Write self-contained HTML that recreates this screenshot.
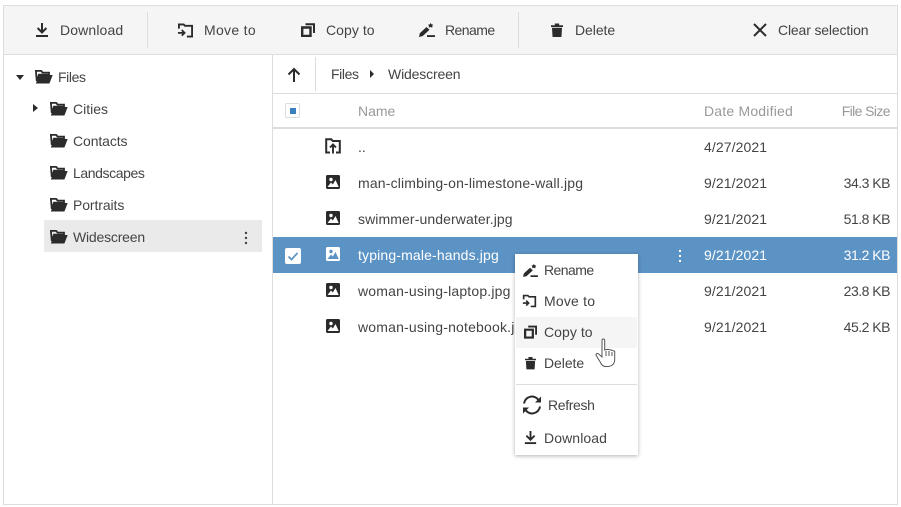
<!DOCTYPE html>
<html><head><meta charset="utf-8">
<style>
html,body{margin:0;padding:0;background:#fff}
body{width:901px;height:507px;position:relative;overflow:hidden;font-family:"Liberation Sans",sans-serif;font-size:14px;color:#444}
.a{position:absolute}
.t{position:absolute;white-space:nowrap;line-height:20px;font-size:14px;color:#444}
.r{text-align:right}
.g{color:#999}
.w{color:#fff}
svg.i{position:absolute;overflow:visible}
</style></head><body>
<svg width="0" height="0" style="position:absolute">
<defs>
<symbol id="dl" viewBox="0 0 16 16"><path d="M8 1v9.500M3.600 6 8 10.400 12.400 6" fill="none" stroke="#2b2b2b" stroke-width="2"/><path d="M2 14h12" stroke="#2b2b2b" stroke-width="2"/></symbol>
<symbol id="mv" viewBox="0 0 18 16"><path d="M2 6V1.500h5l1.500 1.500H16v11.500h-5.500M4 14.500" fill="none" stroke="#2b2b2b" stroke-width="2"/><path d="M1 10.500h6.500M5 7.500l3 3-3 3" fill="none" stroke="#2b2b2b" stroke-width="1.900"/></symbol>
<symbol id="cp" viewBox="0 0 14 14"><path d="M1.200 4.500h8.300V13H1.200z" fill="none" stroke="#2b2b2b" stroke-width="2.400"/><path d="M4.500 1.200H13V10" fill="none" stroke="#2b2b2b" stroke-width="2"/></symbol>
<symbol id="rn" viewBox="0 0 16 14"><path d="M0 14l.8-3.800L7.500 4l3 2.800L3.800 13z" fill="#2b2b2b"/><path d="M11.500 0l1.100 1.400 1.700.3-1.100 1.300.2 1.700-1.900-.7-1.700.7.200-1.700L9 1.700l1.700-.3z" fill="#2b2b2b"/><path d="M8 13.100h8" stroke="#2b2b2b" stroke-width="1.900"/></symbol>
<symbol id="del" viewBox="0 0 12 14"><path d="M0 2.300h12v1.700H0zM3.800 2.500V.5h4.400v2z" fill="#2b2b2b"/><path d="M1 4.800h10l-.5 8.700q0 .5-.6.500H2.100q-.6 0-.6-.5z" fill="#2b2b2b"/></symbol>
<symbol id="x" viewBox="0 0 14 14"><path d="M1 1l12 12M13 1 1 13" stroke="#2b2b2b" stroke-width="2" fill="none"/></symbol>
<symbol id="fo" viewBox="0 0 18 14"><path d="M.9.900h5.300l1.400 1.700H14v2H4L1.800 11z" fill="none" stroke="#2b2b2b" stroke-width="1.800"/><path d="M4.500 5h13.200l-3.300 8.500H.8z" fill="#2b2b2b"/></symbol>
<symbol id="im" viewBox="0 0 14 14"><rect width="14" height="14" rx="1.500" fill="#2b2b2b"/><circle cx="5" cy="4.500" r="1.700" fill="#fff"/><path d="M1.500 12 5 7.500l1.800 2L9.500 5l3.200 7z" fill="#fff"/></symbol>
<symbol id="im2" viewBox="0 0 14 14"><rect width="14" height="14" rx="1.500" fill="#fff"/><circle cx="5" cy="4.500" r="1.700" fill="#5c93c5"/><path d="M1.500 12 5 7.500l1.800 2L9.500 5l3.200 7z" fill="#5c93c5"/></symbol>
<symbol id="up" viewBox="0 0 16 16"><path d="M5 14.500H1.200V1.200h5L7.800 3h7v11.500H11" fill="none" stroke="#2b2b2b" stroke-width="2"/><path d="M8 15.500V7M5 9.500 8 6.500l3 3" fill="none" stroke="#2b2b2b" stroke-width="1.900"/></symbol>
<symbol id="dots" viewBox="0 0 4 14"><circle cx="2" cy="2" r="1.200"/><circle cx="2" cy="7" r="1.200"/><circle cx="2" cy="12" r="1.200"/></symbol>
</defs>
</svg>

<!-- outer frame -->
<div class="a" style="left:3px;top:5px;width:893px;height:498px;border:1px solid #ddd;box-sizing:content-box"></div>
<!-- toolbar -->
<div class="a" style="left:4px;top:6px;width:893px;height:48px;background:#f5f5f5;border-bottom:1px solid #ddd"></div>
<div class="a" style="left:147px;top:12px;width:1px;height:36px;background:#ddd"></div>
<div class="a" style="left:518px;top:12px;width:1px;height:36px;background:#ddd"></div>
<svg class="i" style="left:34px;top:22px" width="16" height="16"><use href="#dl"/></svg>
<div class="t" style="left:60px;top:20px;letter-spacing:.13px">Download</div>
<svg class="i" style="left:177px;top:23px" width="17" height="15"><use href="#mv"/></svg>
<div class="t" style="left:204px;top:20px;letter-spacing:.3px">Move to</div>
<svg class="i" style="left:301px;top:23px" width="14" height="14"><use href="#cp"/></svg>
<div class="t" style="left:326px;top:20px;letter-spacing:.05px">Copy to</div>
<svg class="i" style="left:419px;top:23px" width="16" height="14"><use href="#rn"/></svg>
<div class="t" style="left:445px;top:20px;letter-spacing:-.55px">Rename</div>
<svg class="i" style="left:551px;top:23px" width="12" height="14"><use href="#del"/></svg>
<div class="t" style="left:575px;top:20px;letter-spacing:-.06px">Delete</div>
<svg class="i" style="left:753px;top:23px" width="14" height="14"><use href="#x"/></svg>
<div class="t" style="left:778px;top:20px;letter-spacing:-.15px">Clear selection</div>

<!-- tree -->
<div class="a" style="left:272px;top:55px;width:1px;height:449px;background:#ddd"></div>
<div class="a" style="left:16px;top:75px;width:0;height:0;border-left:4.500px solid transparent;border-right:4.500px solid transparent;border-top:5px solid #2b2b2b"></div>
<svg class="i" style="left:35px;top:70px" width="18" height="14"><use href="#fo"/></svg>
<div class="t" style="left:58px;top:67px;letter-spacing:-.4px">Files</div>
<div class="a" style="left:33px;top:104px;width:0;height:0;border-top:4.500px solid transparent;border-bottom:4.500px solid transparent;border-left:5px solid #2b2b2b"></div>
<svg class="i" style="left:50px;top:102px" width="18" height="14"><use href="#fo"/></svg>
<div class="t" style="left:73px;top:99px">Cities</div>
<svg class="i" style="left:50px;top:134px" width="18" height="14"><use href="#fo"/></svg>
<div class="t" style="left:73px;top:131px;letter-spacing:-.1px">Contacts</div>
<svg class="i" style="left:50px;top:166px" width="18" height="14"><use href="#fo"/></svg>
<div class="t" style="left:73px;top:163px;letter-spacing:-.4px">Landscapes</div>
<svg class="i" style="left:50px;top:198px" width="18" height="14"><use href="#fo"/></svg>
<div class="t" style="left:73px;top:195px;letter-spacing:-.1px">Portraits</div>
<div class="a" style="left:44px;top:220px;width:218px;height:32px;background:#eaeaea"></div>
<svg class="i" style="left:50px;top:230px" width="18" height="14"><use href="#fo"/></svg>
<div class="t" style="left:73px;top:227px;letter-spacing:-.2px">Widescreen</div>
<svg class="i" style="left:244px;top:231px;fill:#444" width="4" height="14"><use href="#dots"/></svg>

<!-- breadcrumb -->
<svg class="i" style="left:287px;top:67px" width="14" height="15"><path d="M7 15V2M1.500 7.500 7 2l5.500 5.500" fill="none" stroke="#2b2b2b" stroke-width="2"/></svg>
<div class="a" style="left:315px;top:57px;width:1px;height:34px;background:#ddd"></div>
<div class="t" style="left:331px;top:64px;letter-spacing:-.4px">Files</div>
<div class="a" style="left:370px;top:70px;width:0;height:0;border-top:4px solid transparent;border-bottom:4px solid transparent;border-left:4.500px solid #2b2b2b"></div>
<div class="t" style="left:388px;top:64px;letter-spacing:-.15px">Widescreen</div>
<div class="a" style="left:273px;top:93px;width:624px;height:1px;background:#ddd"></div>

<!-- header -->
<div class="a" style="left:285px;top:103px;width:15px;height:15px;border:1px solid #ddd;border-radius:2px;box-sizing:border-box;background:#fff"></div>
<div class="a" style="left:290px;top:108px;width:6px;height:6px;background:#3b7fbf"></div>
<div class="t g" style="left:358px;top:101px">Name</div>
<div class="t g" style="left:704px;top:101px;letter-spacing:.2px">Date Modified</div>
<div class="t g r" style="right:11px;top:101px;letter-spacing:-.6px">File Size</div>
<div class="a" style="left:273px;top:127px;width:624px;height:2px;background:#ddd"></div>

<!-- rows -->
<svg class="i" style="left:325px;top:138px" width="16" height="16"><use href="#up"/></svg>
<div class="t" style="left:358px;top:137px">..</div>
<div class="t" style="left:704px;top:137px;letter-spacing:.1px">4/27/2021</div>

<svg class="i" style="left:326px;top:175px" width="14" height="14"><use href="#im"/></svg>
<div class="t" style="left:358px;top:173px;letter-spacing:.17px">man-climbing-on-limestone-wall.jpg</div>
<div class="t" style="left:704px;top:173px;letter-spacing:.1px">9/21/2021</div>
<div class="t r" style="right:11px;top:173px;letter-spacing:-.5px">34.3 KB</div>

<svg class="i" style="left:326px;top:211px" width="14" height="14"><use href="#im"/></svg>
<div class="t" style="left:358px;top:209px;letter-spacing:.1px">swimmer-underwater.jpg</div>
<div class="t" style="left:704px;top:209px;letter-spacing:.1px">9/21/2021</div>
<div class="t r" style="right:11px;top:209px;letter-spacing:-.5px">51.8 KB</div>

<div class="a" style="left:273px;top:237px;width:624px;height:36px;background:#5c93c5"></div>
<div class="a" style="left:285px;top:248px;width:16px;height:16px;background:#fff;border-radius:2px"></div>
<svg class="i" style="left:285px;top:248px" width="16" height="16"><path d="M3.500 8.500 6.500 11.500 12.500 5" fill="none" stroke="#5c93c5" stroke-width="1.700"/></svg>
<svg class="i" style="left:326px;top:247px" width="14" height="14"><use href="#im2"/></svg>
<div class="t w" style="left:358px;top:245px;letter-spacing:.15px">typing-male-hands.jpg</div>
<svg class="i" style="left:678px;top:249px;fill:#fff" width="4" height="14"><use href="#dots"/></svg>
<div class="t w" style="left:704px;top:245px;letter-spacing:.1px">9/21/2021</div>
<div class="t w r" style="right:11px;top:245px;letter-spacing:-.5px">31.2 KB</div>

<svg class="i" style="left:326px;top:283px" width="14" height="14"><use href="#im"/></svg>
<div class="t" style="left:358px;top:281px;letter-spacing:.18px">woman-using-laptop.jpg</div>
<div class="t" style="left:704px;top:281px;letter-spacing:.1px">9/21/2021</div>
<div class="t r" style="right:11px;top:281px;letter-spacing:-.5px">23.8 KB</div>

<svg class="i" style="left:326px;top:319px" width="14" height="14"><use href="#im"/></svg>
<div class="t" style="left:358px;top:317px;letter-spacing:.18px">woman-using-notebook.jpg</div>
<div class="t" style="left:704px;top:317px;letter-spacing:.1px">9/21/2021</div>
<div class="t r" style="right:11px;top:317px;letter-spacing:-.5px">45.2 KB</div>

<!-- context menu -->
<div class="a" style="left:515px;top:254px;width:123px;height:201px;background:#fff;box-shadow:0 1px 4px rgba(0,0,0,.3)"></div>
<div class="a" style="left:516px;top:317px;width:121px;height:31px;background:#f5f5f5"></div>
<svg class="i" style="left:523px;top:264px" width="15" height="13"><use href="#rn"/></svg>
<div class="t" style="left:544px;top:260px;letter-spacing:-.55px">Rename</div>
<svg class="i" style="left:522px;top:294px" width="15" height="14"><use href="#mv"/></svg>
<div class="t" style="left:544px;top:291px;letter-spacing:.2px">Move to</div>
<svg class="i" style="left:524px;top:325px" width="13" height="14"><use href="#cp"/></svg>
<div class="t" style="left:544px;top:322px;letter-spacing:.05px">Copy to</div>
<svg class="i" style="left:525px;top:356px" width="11" height="14"><use href="#del"/></svg>
<div class="t" style="left:544px;top:353px;letter-spacing:-.06px">Delete</div>
<div class="a" style="left:516px;top:384px;width:121px;height:1px;background:#ddd"></div>
<svg class="i" style="left:522px;top:395px" width="20" height="20" viewBox="0 0 20 20"><path d="M2 8.500A8 8 0 0 1 16.500 5M18 11.500A8 8 0 0 1 3.500 15" fill="none" stroke="#2b2b2b" stroke-width="2"/><path d="M19 1.500v6h-6zM1 18.500v-6h6z" fill="#2b2b2b"/></svg>
<div class="t" style="left:548px;top:395px;letter-spacing:-.35px">Refresh</div>
<svg class="i" style="left:523px;top:430px" width="15" height="15"><use href="#dl"/></svg>
<div class="t" style="left:544px;top:428px;letter-spacing:.1px">Download</div>

<!-- hand cursor -->
<svg class="i" style="left:595px;top:338px" width="22" height="30" viewBox="0 0 22 30"><path d="M7 2.500q0-1.500 1.300-1.500T9.700 2.500V12q3 -1 5 -.3 4 .8 5 1.800v9q-.5 5-6 6H10q-3-.5-4.500-4L1.200 17.500q-.6-1.500.8-2 1.300-.3 2.300 1L7 19z" fill="#fff" stroke="#555" stroke-width="1"/><path d="M11 13v5M14 13v5M17 14v4" stroke="#555" stroke-width="1"/></svg>
</body></html>
